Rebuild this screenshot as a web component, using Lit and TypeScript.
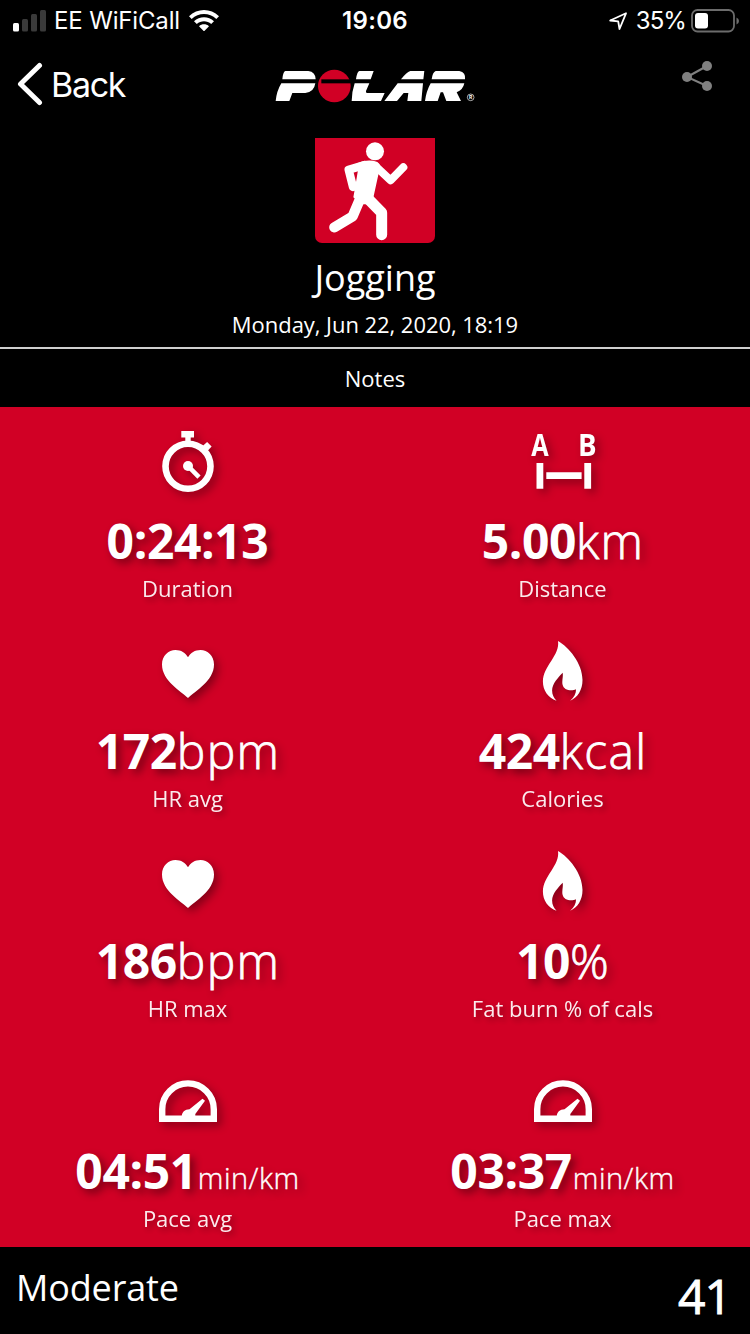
import { LitElement, html, css, svg } from "lit";
import { customElement, property } from "lit/decorators.js";

const icons: Record<string, unknown> = {
  stopwatch: svg`
    <circle cx="32" cy="36.3" r="22.5" fill="none" stroke="#fff" stroke-width="6.6"/>
    <path d="M25.3 1H38v6.500H34.700V12H29.300V7.500H25.300z" fill="#fff"/>
    <path d="M45.500 17L51.100 12L55.600 16.500L50.600 22z" fill="#fff"/>
    <circle cx="32" cy="36" r="5" fill="#fff"/>
    <path d="M32 36L43 47.200" stroke="#fff" stroke-width="4.600"/>`,
  distance: svg`
    <text x="0.2" y="26.3" textLength="17.4" lengthAdjust="spacingAndGlyphs" class="pin">A</text>
    <text x="47" y="26.3" textLength="18.6" lengthAdjust="spacingAndGlyphs" class="pin">B</text>
    <path d="M5.500 33h6.800v25.700H5.500zM53.300 33h6.800v25.700h-6.800zM15.300 42.300h35.300V49H15.300z" fill="#fff"/>`,
  heart: svg`<path d="M32 58C25 51 6 41 6 24.500C6 15.500 12.500 10 19.500 10C25 10 29.500 12.800 32 17.300C34.500 12.800 39 10 44.500 10C51.500 10 58 15.500 58 24.500C58 41 39 51 32 58z" fill="#fff"/>`,
  flame: svg`<path d="M27 1C37.500 7 51.500 23 51.500 40C51.500 50 46.700 57.500 39.200 60.700C43.200 57 45.200 53.500 45 49.200C42.700 50.500 39.700 50.500 37.200 50C33.200 49 31.200 46 31.300 42C31.400 38.500 32.200 35.500 31.700 32.700C27.200 37.500 21.200 43.500 21.100 50.500C21.100 54.500 22.700 58 25.500 60.700C17.200 58 11.900 50.500 11.900 41.500C11.900 26 29.200 15.500 27 1z" fill="#fff"/>`,
  gauge: svg`
    <path d="M6.200 58.800V49.200a25.800 25.800 0 0 1 51.600 0V58.800z" fill="none" stroke="#fff" stroke-width="6.400"/>
    <path d="M25.800 57C25.500 52.300 29 49.300 33.500 49.300L46.500 38.700L49 40.800L39.300 54V57z" fill="#fff"/>`,
};

@customElement("stat-tile")
class StatTile extends LitElement {
  @property() icon = "";
  @property() value = "";
  @property() unit = "";
  @property() label = "";
  @property({ type: Boolean }) small = false;

  static styles = css`
    :host { display: flex; flex-direction: column; align-items: center; height: 210px; color: #fff; }
    .icon { width: 64px; height: 64px; margin-top: 23px; overflow: visible; filter: drop-shadow(4px 4px 4px rgba(0, 0, 0, 0.36)); }
    .pin { font: 700 30px "Open Sans", "Noto Sans", sans-serif; fill: #fff; }
    .value { display: flex; align-items: baseline; margin-top: 14px; height: 65px; line-height: 66px; font-size: 48px; font-weight: 700; letter-spacing: -0.4px; white-space: nowrap; text-shadow: 4px 4px 8px rgba(0, 0, 0, 0.45); }
    .unit { font-weight: 300; letter-spacing: 1.3px; margin-right: -1px; -webkit-text-stroke: 0.8px #fff; }
    .unit.small { font-size: 29px; margin: 0 0 0 1px; letter-spacing: 0.5px; -webkit-text-stroke-width: 0.4px; }
    .label { height: 30px; line-height: 30px; font-size: 22px; opacity: 0.92; text-shadow: 3px 3px 6px rgba(0, 0, 0, 0.4); }
  `;

  render() {
    return html`
      <svg class="icon" viewBox="0 0 64 64">${icons[this.icon]}</svg>
      <div class="value"><span>${this.value}</span>${this.unit ? html`<span class="unit ${this.small ? "small" : ""}">${this.unit}</span>` : ""}</div>
      <div class="label">${this.label}</div>
    `;
  }
}

const stats = [
  { icon: "stopwatch", value: "0:24:13", unit: "", label: "Duration" },
  { icon: "distance", value: "5.00", unit: "km", label: "Distance" },
  { icon: "heart", value: "172", unit: "bpm", label: "HR avg" },
  { icon: "flame", value: "424", unit: "kcal", label: "Calories" },
  { icon: "heart", value: "186", unit: "bpm", label: "HR max" },
  { icon: "flame", value: "10", unit: "%", label: "Fat burn % of cals" },
  { icon: "gauge", value: "04:51", unit: "min/km", label: "Pace avg", small: true },
  { icon: "gauge", value: "03:37", unit: "min/km", label: "Pace max", small: true },
];

@customElement("app-root")
class AppRoot extends LitElement {
  static styles = css`
    :host { display: flex; flex-direction: column; width: 750px; height: 1334px; overflow: hidden; background: #000; color: #fff; font-family: "Open Sans", "Noto Sans", sans-serif; }
    .status, .nav { display: grid; grid-template-columns: 1fr auto 1fr; font-family: Inter, sans-serif; }
    .status { height: 40px; align-items: center; font-size: 24px; line-height: 42px; }
    .left, .right { display: flex; align-items: center; }
    .left { padding-left: 13px; }
    .right { justify-content: flex-end; padding-right: 11px; }
    .carrier { margin: 0 9px 0 8px; letter-spacing: -0.15px; }
    .time { font-weight: 600; letter-spacing: 0.3px; }
    .percent { margin: 0 5px 0 8px; letter-spacing: -0.9px; }
    .nav { height: 98px; }
    .back { display: flex; align-items: center; height: 88px; padding-left: 17px; font-size: 34px; letter-spacing: -1.3px; }
    .back span { margin-left: 8px; }
    .logo { margin-top: 15px; }
    .share { justify-self: end; margin: 20px 37px 0 0; }
    .summary { display: flex; flex-direction: column; align-items: center; height: 209px; border-bottom: 2px solid #cfcfcf; }
    .sport { width: 120px; height: 105px; background: #d10025; border-radius: 0 0 7px 7px; }
    .title { margin-top: 10px; height: 50px; line-height: 50px; font-size: 36px; }
    .date { margin-top: 7px; height: 30px; line-height: 29px; font-size: 22px; letter-spacing: -0.05px; }
    .notes { height: 58px; line-height: 59px; text-align: center; font-size: 22px; }
    .grid { display: grid; grid-template-columns: 1fr 1fr; background: #d10025; }
    .footer { display: flex; justify-content: space-between; height: 87px; padding: 0 19px 0 16px; }
    .level { font-size: 36px; letter-spacing: -0.15px; line-height: 82px; }
    .score { font-size: 48px; font-weight: 400; letter-spacing: -1px; line-height: 97px; -webkit-text-stroke: 0.9px #fff; }
  `;

  render() {
    return html`
      <div class="status">
        <div class="left">
          <svg width="33" height="22" viewBox="0 0 33 22">
            <rect y="13" width="6" height="8.500" rx="1.500" fill="#fff"/>
            <g fill="#3a3a3a"><rect x="9" y="9" width="6" height="12.500" rx="1.500"/><rect x="18" y="4" width="6" height="17.500" rx="1.500"/><rect x="27" width="6" height="21.500" rx="1.500"/></g>
          </svg>
          <span class="carrier">EE WiFiCall</span>
          <svg width="30" height="22" viewBox="0 0 30 22" fill="#fff">
            <path d="M0 6.300C8.300-2 21.700-2 30 6.300L27.300 9.100C20.500 2.400 9.500 2.400 2.700 9.100z"/>
            <path d="M5 11.300C10.500 5.900 19.500 5.900 25 11.300L22.200 14.100C18.200 10.300 11.800 10.300 7.800 14.100z"/>
            <path d="M10 16.300C12.900 13.700 17.100 13.700 20 16.300L15.600 20.800Q15 21.300 14.400 20.800z"/>
          </svg>
        </div>
        <div class="time">19:06</div>
        <div class="right">
          <svg width="19" height="19" viewBox="0 0 19 19"><path d="M1.200 8.500L17 1.300L10.500 17L9.200 9.300z" fill="none" stroke="#fff" stroke-width="1.800" stroke-linejoin="round"/></svg>
          <span class="percent">35%</span>
          <svg width="48" height="24" viewBox="0 0 48 24">
            <rect x="1" y="1" width="42" height="21.500" rx="5.500" fill="none" stroke="#6c6c6c" stroke-width="1.800"/>
            <rect x="4" y="4" width="13" height="15.500" rx="3" fill="#fff"/>
            <path d="M45.500 8.500Q48 9.500 48 12T45.500 15.500z" fill="#6c6c6c"/>
          </svg>
        </div>
      </div>

      <div class="nav">
        <div class="back">
          <svg width="26" height="44" viewBox="0 0 26 44"><path d="M22.500 3.500L3.500 22L22.500 40.500" fill="none" stroke="#fff" stroke-width="5" stroke-linecap="round" stroke-linejoin="round"/></svg>
          <span>Back</span>
        </div>
        <svg class="logo" width="230" height="60" viewBox="0 0 690 180" fill="#fff">
          <path d="M76 48H145Q166 50 167 73H67Q69 50 76 48z"/>
          <path d="M64 85H166Q162 112 136 114H97L88 138H47Q50 108 64 85z"/>
          <circle cx="223" cy="93" r="49" fill="#d10025"/>
          <path d="M184 73H274V85H184z" fill="#000"/>
          <path d="M298 48H341L332 73H288Q291 50 298 48z"/>
          <path d="M284 85H328L318 108Q316 114 322 114H374L363 138H275Q276 108 284 85z"/>
          <path d="M451 48H493L490 73H423Q439 52 451 48z"/>
          <path d="M413 85H489L484 138H442L445 114H431L411 138H373z"/>
          <path d="M527 48H598Q618 52 615 73H515Q518 51 527 48z"/>
          <path d="M512 85H613Q609 105 590 112L603 138H559L549 112H542L533 138H495Q499 108 512 85z"/>
          <circle cx="632" cy="127" r="10" fill="none" stroke="#fff" stroke-width="2"/>
          <text x="627" y="133" font-size="15" font-weight="700">R</text>
        </svg>
        <svg class="share" width="32" height="32" viewBox="0 0 32 32">
          <path d="M26 6L6 17L26 26" fill="none" stroke="#808080" stroke-width="2"/>
          <g fill="#808080"><circle cx="26" cy="6" r="5"/><circle cx="6" cy="17" r="5"/><circle cx="26" cy="26" r="5"/></g>
        </svg>
      </div>

      <div class="summary">
        <svg class="sport" viewBox="285 24 360 315">
          <g fill="none" stroke="#fff" stroke-linecap="round" stroke-linejoin="round">
            <path d="M468 110L512 151L550 112" stroke-width="24"/>
            <path d="M434 105L386 119L399 171" stroke-width="25"/>
            <path d="M421 205L398 259L343 292" stroke-width="31"/>
            <path d="M438 200L485 248V314" stroke-width="33"/>
          </g>
          <circle cx="465" cy="64" r="27" fill="#fff"/>
          <path d="M414 99Q445 86 472 96Q488 106 476 130L459 208L444 223H424L400 202L406 168L414 120z" fill="#fff"/>
        </svg>
        <div class="title">Jogging</div>
        <div class="date">Monday, Jun 22, 2020, 18:19</div>
      </div>
      <div class="notes">Notes</div>

      <div class="grid">
        ${stats.map((s) => html`<stat-tile .icon=${s.icon} .value=${s.value} .unit=${s.unit} .label=${s.label} .small=${!!s.small}></stat-tile>`)}
      </div>

      <div class="footer">
        <div class="level">Moderate</div>
        <div class="score">41</div>
      </div>
    `;
  }
}
